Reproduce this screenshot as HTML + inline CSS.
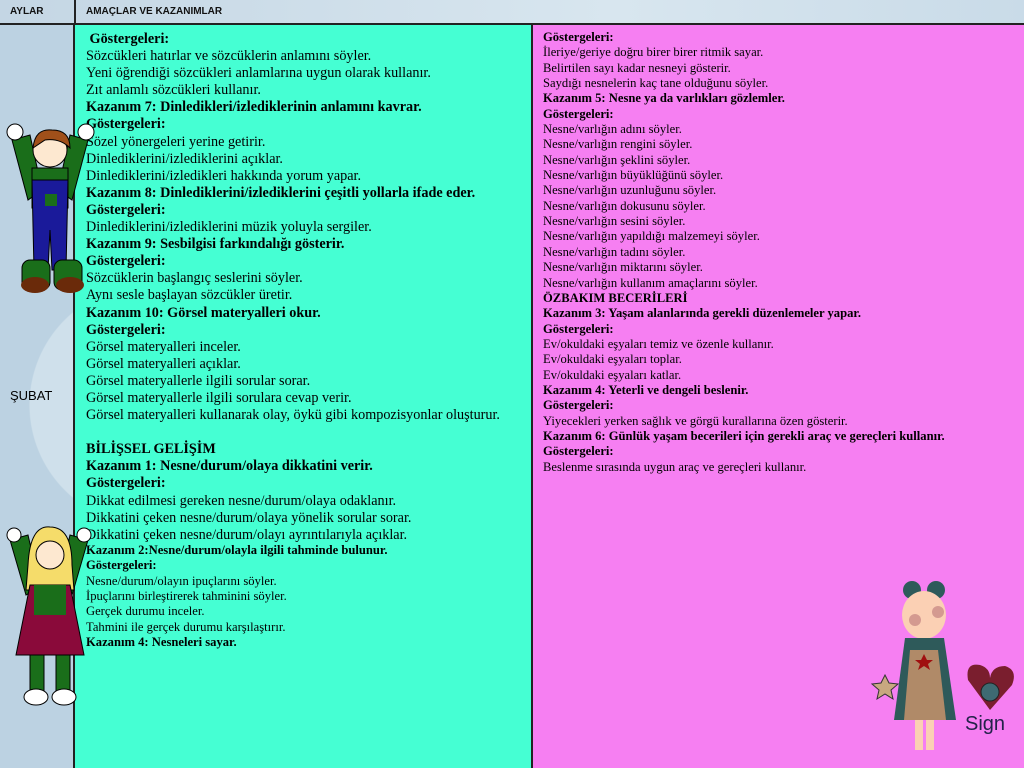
<!DOCTYPE html>
<html><head><meta charset="utf-8"><style>
*{margin:0;padding:0;box-sizing:border-box}
body{width:1024px;height:768px;overflow:hidden;position:relative;background:#b9cfdf;font-family:"Liberation Serif",serif}
.hdr{position:absolute;left:0;top:0;width:1024px;height:25px;background:linear-gradient(90deg,#c4d6e4,#d8e6ef 60%,#c9dbe8);border-bottom:2px solid #222}
.hdr span{position:absolute;top:6px;font-family:"Liberation Sans",sans-serif;font-size:10px;font-weight:bold;color:#111}
.left{position:absolute;left:0;top:25px;width:75px;height:743px;background:radial-gradient(circle at 150px 380px,#cfe0eb 0 120px,#bcd2e2 121px);border-right:2px solid #222}
.cyan{position:absolute;left:75px;top:25px;width:458px;height:743px;background:#45ffd3;border-right:2px solid #222}
.mag{position:absolute;left:533px;top:25px;width:491px;height:743px;background:#f67ff2}
.t{position:absolute;left:86px;top:31px;font-size:14.2px;line-height:17.1px;color:#000;white-space:nowrap}
.t2{position:absolute;left:86px;top:543px;font-size:12.6px;line-height:15.35px;white-space:nowrap}
.r{position:absolute;left:543px;top:30px;font-size:12.6px;line-height:15.35px;white-space:nowrap}
b{font-weight:bold}
</style></head><body>
<div class="hdr"><span style="left:10px">AYLAR</span><span style="left:86px">AMAÇLAR VE KAZANIMLAR</span></div>
<div style="position:absolute;left:74px;top:0;width:2px;height:25px;background:#222"></div>
<div class="left"></div>
<div class="cyan"></div>
<div class="mag"></div>
<div style="position:absolute;left:10px;top:388px;font-family:'Liberation Sans',sans-serif;font-size:13px">ŞUBAT</div>
<div class="t"><b>&nbsp;Göstergeleri:</b><br>Sözcükleri hatırlar ve sözcüklerin anlamını söyler.<br>Yeni öğrendiği sözcükleri anlamlarına uygun olarak kullanır.<br>Zıt anlamlı sözcükleri kullanır.<br><b>Kazanım 7: Dinledikleri/izlediklerinin anlamını kavrar.</b><br><b>Göstergeleri:</b><br>Sözel yönergeleri yerine getirir.<br>Dinlediklerini/izlediklerini açıklar.<br>Dinlediklerini/izledikleri hakkında yorum yapar.<br><b>Kazanım 8: Dinlediklerini/izlediklerini çeşitli yollarla ifade eder.</b><br><b>Göstergeleri:</b><br>Dinlediklerini/izlediklerini müzik yoluyla sergiler.<br><b>Kazanım 9: Sesbilgisi farkındalığı gösterir.</b><br><b>Göstergeleri:</b><br>Sözcüklerin başlangıç seslerini söyler.<br>Aynı sesle başlayan sözcükler üretir.<br><b>Kazanım 10: Görsel materyalleri okur.</b><br><b>Göstergeleri:</b><br>Görsel materyalleri inceler.<br>Görsel materyalleri açıklar.<br>Görsel materyallerle ilgili sorular sorar.<br>Görsel materyallerle ilgili sorulara cevap verir.<br>Görsel materyalleri kullanarak olay, öykü gibi kompozisyonlar oluşturur.<br>&nbsp;<br><b>BİLİŞSEL GELİŞİM</b><br><b>Kazanım 1: Nesne/durum/olaya dikkatini verir.</b><br><b>Göstergeleri:</b><br>Dikkat edilmesi gereken nesne/durum/olaya odaklanır.<br>Dikkatini çeken nesne/durum/olaya yönelik sorular sorar.<br>Dikkatini çeken nesne/durum/olayı ayrıntılarıyla açıklar.</div>
<div class="t2"><b>Kazanım 2:Nesne/durum/olayla ilgili tahminde bulunur.</b><br><b>Göstergeleri:</b><br>Nesne/durum/olayın ipuçlarını söyler.<br>İpuçlarını birleştirerek tahminini söyler.<br>Gerçek durumu inceler.<br>Tahmini ile gerçek durumu karşılaştırır.<br><b>Kazanım 4: Nesneleri sayar.</b></div>
<div class="r"><b>Göstergeleri:</b><br>İleriye/geriye doğru birer birer ritmik sayar.<br>Belirtilen sayı kadar nesneyi gösterir.<br>Saydığı nesnelerin kaç tane olduğunu söyler.<br><b>Kazanım 5: Nesne ya da varlıkları gözlemler.</b><br><b>Göstergeleri:</b><br>Nesne/varlığın adını söyler.<br>Nesne/varlığın rengini söyler.<br>Nesne/varlığın şeklini söyler.<br>Nesne/varlığın büyüklüğünü söyler.<br>Nesne/varlığın uzunluğunu söyler.<br>Nesne/varlığın dokusunu söyler.<br>Nesne/varlığın sesini söyler.<br>Nesne/varlığın yapıldığı malzemeyi söyler.<br>Nesne/varlığın tadını söyler.<br>Nesne/varlığın miktarını söyler.<br>Nesne/varlığın kullanım amaçlarını söyler.<br><b>ÖZBAKIM BECERİLERİ</b><br><b>Kazanım 3: Yaşam alanlarında gerekli düzenlemeler yapar.</b><br><b>Göstergeleri:</b><br>Ev/okuldaki eşyaları temiz ve özenle kullanır.<br>Ev/okuldaki eşyaları toplar.<br>Ev/okuldaki eşyaları katlar.<br><b>Kazanım 4: Yeterli ve dengeli beslenir.</b><br><b>Göstergeleri:</b><br>Yiyecekleri yerken sağlık ve görgü kurallarına özen gösterir.<br><b>Kazanım 6: Günlük yaşam becerileri için gerekli araç ve gereçleri kullanır.</b><br><b>Göstergeleri:</b><br>Beslenme sırasında uygun araç ve gereçleri kullanır.</div>
<svg style="position:absolute;left:0;top:120px" width="100" height="180">
<path d="M12 20 L28 80 L42 70 L30 15Z" fill="#1a6e1a" stroke="#000"/>
<path d="M88 20 L72 80 L58 70 L70 15Z" fill="#1a6e1a" stroke="#000"/>
<circle cx="15" cy="12" r="8" fill="#fff" stroke="#000"/><circle cx="86" cy="12" r="8" fill="#fff" stroke="#000"/>
<rect x="32" y="48" width="36" height="40" fill="#1a6e1a" stroke="#000"/>
<circle cx="50" cy="30" r="17" fill="#fde8d0" stroke="#000"/>
<path d="M33 28 Q35 8 52 10 Q70 10 70 28 Q60 18 45 20Z" fill="#a0501a" stroke="#000"/>
<path d="M32 60 L68 60 L66 150 L52 150 L50 110 L48 150 L34 150Z" fill="#1a1a9a" stroke="#000"/>
<rect x="45" y="74" width="12" height="12" fill="#1a6e1a"/>
<rect x="22" y="140" width="28" height="30" rx="8" fill="#1a6e1a" stroke="#000"/>
<rect x="54" y="140" width="28" height="30" rx="8" fill="#1a6e1a" stroke="#000"/>
<ellipse cx="35" cy="165" rx="14" ry="8" fill="#6a2a0a"/><ellipse cx="70" cy="165" rx="14" ry="8" fill="#6a2a0a"/>
</svg>
<svg style="position:absolute;left:0;top:525px" width="100" height="190">
<path d="M10 15 L26 70 L40 62 L28 10Z" fill="#1a6e1a" stroke="#000"/>
<path d="M88 15 L72 70 L58 62 L70 10Z" fill="#1a6e1a" stroke="#000"/>
<circle cx="14" cy="10" r="7" fill="#fff" stroke="#000"/><circle cx="84" cy="10" r="7" fill="#fff" stroke="#000"/>
<path d="M28 40 Q30 0 50 2 Q72 2 72 40 L74 65 L26 65Z" fill="#f5dc6a" stroke="#000"/>
<circle cx="50" cy="30" r="14" fill="#fde8d0" stroke="#000"/>
<path d="M30 60 L70 60 L84 130 L16 130Z" fill="#8a0a3a" stroke="#000"/>
<rect x="34" y="60" width="32" height="30" fill="#1a6e1a"/>
<rect x="30" y="130" width="14" height="40" fill="#1a6e1a" stroke="#000"/><rect x="56" y="130" width="14" height="40" fill="#1a6e1a" stroke="#000"/>
<ellipse cx="36" cy="172" rx="12" ry="8" fill="#fff" stroke="#000"/><ellipse cx="64" cy="172" rx="12" ry="8" fill="#fff" stroke="#000"/>
</svg>
<svg style="position:absolute;left:860px;top:570px" width="164" height="198">
<circle cx="52" cy="20" r="9" fill="#2e5a5a"/><circle cx="76" cy="20" r="9" fill="#2e5a5a"/>
<ellipse cx="64" cy="45" rx="22" ry="24" fill="#fbd0b4"/>
<circle cx="55" cy="50" r="6" fill="#d49a90"/><circle cx="78" cy="42" r="6" fill="#d49a90"/>
<path d="M45 68 L84 68 L96 150 L34 150Z" fill="#2e5a5a"/>
<path d="M50 80 L78 80 L86 150 L44 150Z" fill="#b08a68"/>
<path d="M64 84 l3 6 6 0 -5 4 2 6 -6 -4 -6 4 2 -6 -5 -4 6 0z" fill="#a01010"/>
<rect x="55" y="150" width="8" height="30" fill="#fbd0b4"/><rect x="66" y="150" width="8" height="30" fill="#fbd0b4"/>
<path d="M25 105 l4 8 9 1 -7 6 2 9 -8 -5 -8 5 2 -9 -7 -6 9 -1z" fill="#c8a880" stroke="#333"/>
<path d="M130 140 L108 110 Q105 92 120 95 Q130 98 130 108 Q132 96 145 96 Q158 100 152 115Z" fill="#7a1e2e"/>
<circle cx="130" cy="122" r="9" fill="#3e6a72" stroke="#222"/>
<text x="105" y="160" font-family="Liberation Sans,sans-serif" font-size="20" fill="#22224a">Sign</text>
</svg>
</body></html>
